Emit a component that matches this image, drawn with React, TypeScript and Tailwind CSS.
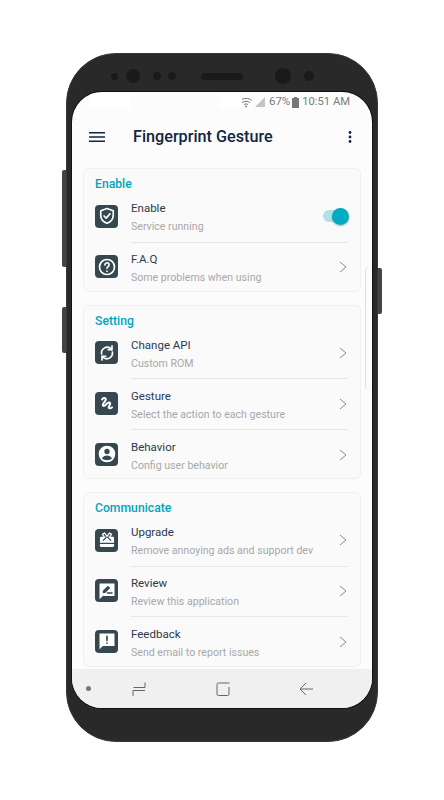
const Icon = ({ children }: { children: React.ReactNode }) => (
  <div className="-mt-[2px] flex h-[23px] w-[23px] shrink-0 items-center justify-center rounded-[4px] bg-[#37474f]">
    <svg width="20" height="20" viewBox="0 0 24 24" fill="none" stroke="#fff" strokeWidth="2" strokeLinecap="round" strokeLinejoin="round">
      {children}
    </svg>
  </div>
)

const Chevron = () => (
  <svg width="8" height="12" viewBox="0 0 8 12" fill="none" stroke="#8a8a8a" strokeWidth="1" className="shrink-0">
    <path d="M1 1l6 5-6 5" />
  </svg>
)

const Toggle = () => (
  <div className="relative -mt-[2px] h-[12px] w-[25px] shrink-0 rounded-full bg-[#aee3ea]">
    <div className="absolute right-[-1px] top-[-2px] h-[17px] w-[17px] rounded-full bg-[#00acc1] shadow-[0_1px_2px_rgba(0,0,0,0.3)]" />
  </div>
)

type RowProps = { title: string; sub: string; icon: React.ReactNode; right?: React.ReactNode; last?: boolean }

const Row = ({ title, sub, icon, right, last }: RowProps) => (
  <div className="flex h-[50.6px] items-center pl-[11px] pr-[12px]">
    <Icon>{icon}</Icon>
    <div className={`ml-[13px] flex h-full min-w-0 flex-1 items-center justify-between ${last ? "" : "border-b border-[#e6e6e6]"}`}>
      <div className="flex flex-col pt-[3px]">
        <span className="text-[11.5px] leading-[18px] text-[#2a3a4a]">{title}</span>
        <span className="text-[10.6px] leading-[20px] text-[#a8a8a8]">{sub}</span>
      </div>
      {right ?? <div className="-mt-[1px] pr-[1px]"><Chevron /></div>}
    </div>
  </div>
)

const Card = ({ title, children }: { title: string; children: React.ReactNode }) => (
  <section className="shrink-0 rounded-[6px] border border-[#f0f0f0] bg-[#fafafa] pt-[7px]">
    <h2 className="pl-[11px] text-[12.2px] font-medium leading-[16px] text-[#00a5bb]">{title}</h2>
    <div className="-mb-[2px]">{children}</div>
  </section>
)

export default function App() {
  return (
    <main className="min-h-[800px] w-[444px] bg-white pt-[53px] font-['Roboto',sans-serif]">
      <div className="relative ml-[66px] h-[689px] w-[312px] rounded-[50px] border border-[#383838] bg-[#292929]">
        {/* side buttons */}
        <div className="absolute left-[-5px] top-[116px] h-[97px] w-[4px] rounded-l-[2px] bg-[#444]" />
        <div className="absolute left-[-5px] top-[253px] h-[46px] w-[4px] rounded-l-[2px] bg-[#444]" />
        <div className="absolute right-[-5px] top-[214px] h-[46px] w-[4px] rounded-r-[2px] bg-[#444]" />

        {/* sensors */}
        <div className="absolute left-[44px] top-[14px] flex items-center">
          <div className="h-[7px] w-[7px] rounded-full bg-[#1a1a1a]" />
          <div className="ml-[8px] h-[14px] w-[14px] rounded-full bg-[#1a1a1a]" />
          <div className="ml-[13px] h-[8px] w-[8px] rounded-full bg-[#1a1a1a]" />
          <div className="ml-[7px] h-[8px] w-[8px] rounded-full bg-[#1a1a1a]" />
          <div className="ml-[25px] h-[7px] w-[42px] rounded-full bg-[#1a1a1a]" />
          <div className="ml-[32px] h-[16px] w-[16px] rounded-full bg-[#1a1a1a]" />
          <div className="ml-[13px] h-[10px] w-[10px] rounded-full bg-[#1a1a1a]" />
        </div>

        <div className="relative ml-[5px] mt-[38px] flex h-[616px] w-[300px] flex-col overflow-hidden rounded-[30px] bg-[#fcfcfc] shadow-[0_0_0_1px_#111]">
          {/* edge panel handle */}
          <div className="absolute right-[2px] top-[174px] h-[125px] w-[5px] rounded-l-[5px] border-l border-[#dedede]" />

          {/* status bar */}
          <div className="relative flex h-[20px] shrink-0 items-center justify-end pr-[22px] text-[#7a7a7a]">
            <div className="absolute left-[18px] top-[1px] h-[15px] w-[41px] bg-white" />
            <div className="absolute left-[147px] top-[1px] h-[15px] w-[23px] bg-white" />
            <svg width="14" height="11" viewBox="0 0 14 11" fill="none" stroke="#777" strokeWidth="1">
              <path d="M1 3.500c3.200-2.800 8.800-2.800 12 0M3 5.600c2.200-1.800 5.800-1.800 8 0M5 7.600c1.200-.9 2.800-.9 4 0" />
              <circle cx="7" cy="9.500" r=".6" fill="#777" />
            </svg>
            <svg width="12" height="10" viewBox="0 0 12 10" className="ml-[1px]">
              <path d="M11 0v10H1z" fill="#c4c4c4" />
            </svg>
            <span className="ml-[3px] text-[11.5px]">67%</span>
            <svg width="7" height="11" viewBox="0 0 7 11" className="ml-[2px]">
              <path d="M2 0h3v1h2v10H0V1h2z" fill="#777" />
            </svg>
            <span className="ml-[3px] text-[11.2px]">10:51 AM</span>
          </div>

          {/* toolbar */}
          <header className="flex h-[50px] shrink-0 items-center pl-[17px] pr-[20px]">
            <svg width="16" height="10" viewBox="0 0 16 10" stroke="#12263f" strokeWidth="1.500">
              <path d="M0 .75h16M0 5h16M0 9.250h16" />
            </svg>
            <h1 className="ml-[28px] flex-1 text-[16.2px] font-medium text-[#12263f]">Fingerprint Gesture</h1>
            <svg width="4" height="12" viewBox="0 0 4 12" fill="#12263f">
              <circle cx="2" cy="1.500" r="1.400" />
              <circle cx="2" cy="6" r="1.400" />
              <circle cx="2" cy="10.500" r="1.400" />
            </svg>
          </header>

          {/* settings list */}
          <div className="flex min-h-0 flex-1 flex-col gap-[12.5px] overflow-hidden px-[11px] pt-[6px]">
            <Card title="Enable">
              <Row
                title="Enable"
                sub="Service running"
                right={<Toggle />}
                icon={
                  <>
                    <path d="M12 3l7.500 2.800v5.200c0 4.800-3.200 8-7.500 9.800-4.300-1.800-7.500-5-7.500-9.800V5.800z" />
                    <path d="M8.500 12l2.500 2.500 4.500-5" />
                  </>
                }
              />
              <Row
                title="F.A.Q"
                sub="Some problems when using"
                last
                icon={
                  <>
                    <circle cx="12" cy="12" r="9" />
                    <path d="M9.500 9.500a2.500 2.500 0 1 1 3.800 2.100c-.9.6-1.300 1-1.300 2" />
                    <path d="M12 16.800v.2" />
                  </>
                }
              />
            </Card>
            <Card title="Setting">
              <Row
                title="Change API"
                sub="Custom ROM"
                icon={
                  <>
                    <path d="M5.500 13a6.800 6.800 0 0 1 10.800-6.500L17.500 8" />
                    <path d="M18 3.500V8h-4.500" />
                    <path d="M18.500 11a6.800 6.800 0 0 1-10.800 6.500L6.500 16" />
                    <path d="M6 20.500V16h4.500" />
                  </>
                }
              />
              <Row
                title="Gesture"
                sub="Select the action to each gesture"
                icon={<path d="M6 6.500c1.500-2.500 5-2 4.500.5-.5 2-3.500 4-3.500 6 0 2 2.500 1.500 4-.5 1.500-2 3.800-3 4.800-1.500 1 1.500-1.800 3-1.800 5 0 1.500 2.500 1.500 4 0" strokeWidth="2.400" />}
              />
              <Row
                title="Behavior"
                sub="Config user behavior"
                last
                icon={
                  <>
                    <circle cx="12" cy="12" r="10" fill="#fff" stroke="none" />
                    <circle cx="12" cy="9" r="3.200" fill="#37474f" stroke="none" />
                    <path d="M6 17.500c1-2.800 3.300-3.800 6-3.800s5 1 6 3.800c-3 2.700-9 2.700-12 0z" fill="#37474f" stroke="none" />
                  </>
                }
              />
            </Card>
            <Card title="Communicate">
              <Row
                title="Upgrade"
                sub="Remove annoying ads and support dev"
                icon={
                  <>
                    <rect x="3.500" y="8" width="17" height="12.500" rx="1.500" fill="#fff" stroke="none" />
                    <path d="M3.500 16h17" stroke="#37474f" strokeWidth="1.500" />
                    <path d="M7.500 12.500 12 8l4.500 4.500" stroke="#37474f" strokeWidth="1.500" />
                    <path d="M12 7.500 9 3.500 6.500 5l2 3M12 7.500l3-4L17.500 5l-2 3" strokeWidth="1.500" />
                  </>
                }
              />
              <Row
                title="Review"
                sub="Review this application"
                icon={
                  <>
                    <path d="M3 3h18v15H7l-4 4z" fill="#fff" stroke="none" />
                    <path d="M7 14.500v-2.800l6-6 2.800 2.800-6 6z" fill="#37474f" stroke="none" />
                    <path d="M12.500 14.500H18" stroke="#37474f" strokeWidth="1.800" />
                  </>
                }
              />
              <Row
                title="Feedback"
                sub="Send email to report issues"
                last
                icon={
                  <>
                    <path d="M3 3h18v15H7l-4 4z" fill="#fff" stroke="none" />
                    <path d="M12 6.500v5M12 14.500v.2" stroke="#37474f" />
                  </>
                }
              />
            </Card>
          </div>

          {/* navigation bar */}
          <nav className="relative flex h-[39px] shrink-0 items-center bg-[#f0f0f0]">
            <div className="ml-[14px] h-[5px] w-[5px] rounded-full bg-[#777]" />
            <svg width="14" height="14" viewBox="0 0 14 14" fill="none" stroke="#666" strokeWidth="1" className="ml-[41px]">
              <path d="M13 .5v5H1.500M13 8.500H1V14" />
            </svg>
            <svg width="14" height="14" viewBox="0 0 14 14" fill="none" stroke="#666" strokeWidth="1" className="ml-[70px]">
              <path d="M13.500 1H2.500Q1 1 1 2.500V12q0 1.500 1.500 1.500h9q1.500 0 1.500-1.500V5" />
            </svg>
            <svg width="15" height="14" viewBox="0 0 15 14" fill="none" stroke="#666" strokeWidth="1" className="ml-[69px]">
              <path d="M14 7H1M7 1 1 7l6 6" />
            </svg>
          </nav>
        </div>
      </div>
    </main>
  )
}
